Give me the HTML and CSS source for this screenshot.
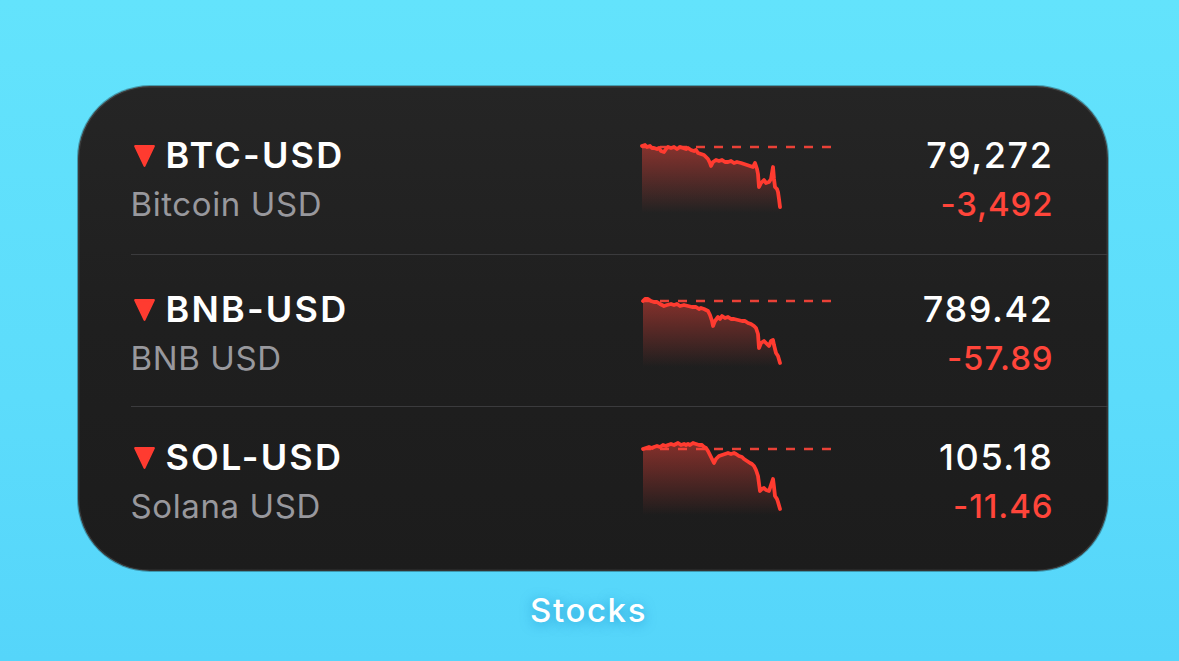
FILE: index.html
```html
<!DOCTYPE html>
<html lang="en">
  <head>
    <meta charset="UTF-8" />
    <meta name="viewport" content="width=device-width, initial-scale=1" />
    <title>Stocks Widget</title>
    <link rel="stylesheet" href="styles.css">
  </head>
  <body>
    <div class="screen">
      <div class="widget">
        <!-- BTC -->
        <div class="row">
          <div class="name">
            <div class="ticker">
              <svg class="arrow" viewBox="0 0 24 24"><polygon points="3,3 21,3 12,22" /></svg>
              <span>BTC-USD</span>
            </div>
            <div class="full">Bitcoin USD</div>
          </div>
          <svg class="chart" viewBox="0 0 194 72">
            <defs>
              <linearGradient id="fade" x1="0" y1="0" x2="0" y2="1">
                <stop offset="0" stop-color="#ff453a" stop-opacity="0.46" />
                <stop offset="1" stop-color="#ff453a" stop-opacity="0" />
              </linearGradient>
            </defs>
            <path class="area" d="M0,5 L3,4 5,6 8,5 10,7 12,7 15,8 17,7 19,10 22,11 24,8 26,6 29,7 32,6 35,8 38,6 41,7 44,8 46,7 49,9 52,10 54,9 56,12 59,13 62,14 64,16 66,18 68,22 69,25 71,21 74,19 77,20 80,19 83,21 86,21 89,20 92,22 95,21 99,22 102,23 105,24 108,25 111,26 113,22 115,28 116,33 117,46 119,42 122,39 124,42 127,41 129,38 131,26 132,38 133,46 135,48 136,51 137,58 138,66 L138,72 L0,72 Z" />
            <line class="prev" x1="0" y1="6" x2="193" y2="6" />
            <polyline class="line" points="0,5 3,4 5,6 8,5 10,7 12,7 15,8 17,7 19,10 22,11 24,8 26,6 29,7 32,6 35,8 38,6 41,7 44,8 46,7 49,9 52,10 54,9 56,12 59,13 62,14 64,16 66,18 68,22 69,25 71,21 74,19 77,20 80,19 83,21 86,21 89,20 92,22 95,21 99,22 102,23 105,24 108,25 111,26 113,22 115,28 116,33 117,46 119,42 122,39 124,42 127,41 129,38 131,26 132,38 133,46 135,48 136,51 137,58 138,66" />
          </svg>
          <div class="quote">
            <div class="price">79,272</div>
            <div class="change">-3,492</div>
          </div>
        </div>
        <!-- BNB -->
        <div class="row">
          <div class="name">
            <div class="ticker">
              <svg class="arrow" viewBox="0 0 24 24"><polygon points="3,3 21,3 12,22" /></svg>
              <span>BNB-USD</span>
            </div>
            <div class="full">BNB USD</div>
          </div>
          <svg class="chart" viewBox="0 0 194 72">
            <path class="area" d="M1,6 L3,4 6,4 9,6 12,7 15,7 18,9 22,11 25,10 29,9 32,10 35,9 38,11 42,10 46,11 50,12 54,12 57,14 59,13 62,14 64,15 66,16 68,20 70,26 71,31 73,26 76,22 78,24 80,21 83,23 86,22 89,24 92,24 96,25 100,26 103,26 106,28 109,29 112,31 114,33 116,39 117,53 119,48 122,46 124,48 127,51 129,46 131,45 132,50 134,58 136,61 138,68 L138,72 L1,72 Z" />
            <line class="prev" x1="0" y1="6" x2="193" y2="6" />
            <polyline class="line" points="1,6 3,4 6,4 9,6 12,7 15,7 18,9 22,11 25,10 29,9 32,10 35,9 38,11 42,10 46,11 50,12 54,12 57,14 59,13 62,14 64,15 66,16 68,20 70,26 71,31 73,26 76,22 78,24 80,21 83,23 86,22 89,24 92,24 96,25 100,26 103,26 106,28 109,29 112,31 114,33 116,39 117,53 119,48 122,46 124,48 127,51 129,46 131,45 132,50 134,58 136,61 138,68" />
          </svg>
          <div class="quote">
            <div class="price">789.42</div>
            <div class="change">-57.89</div>
          </div>
        </div>
        <!-- SOL -->
        <div class="row">
          <div class="name">
            <div class="ticker">
              <svg class="arrow" viewBox="0 0 24 24"><polygon points="3,3 21,3 12,22" /></svg>
              <span>SOL-USD</span>
            </div>
            <div class="full">Solana USD</div>
          </div>
          <svg class="chart" viewBox="0 0 194 72">
            <path class="area" d="M1,6 L4,5 7,4 10,5 12,4 15,3 18,4 21,2 24,3 26,2 29,1 32,2 34,1 36,0 39,2 42,1 44,2 46,1 48,2 51,0 54,1 57,2 60,2 62,4 64,5 66,8 67,10 69,14 72,20 74,16 77,13 80,12 83,11 86,10 89,11 92,10 94,11 97,13 100,14 102,16 105,18 108,20 110,21 112,23 114,27 116,33 118,48 120,46 122,45 124,47 127,48 129,42 131,36 132,44 133,53 135,56 136,59 138,66 L138,72 L1,72 Z" />
            <line class="prev" x1="0" y1="6" x2="193" y2="6" />
            <polyline class="line" points="1,6 4,5 7,4 10,5 12,4 15,3 18,4 21,2 24,3 26,2 29,1 32,2 34,1 36,0 39,2 42,1 44,2 46,1 48,2 51,0 54,1 57,2 60,2 62,4 64,5 66,8 67,10 69,14 72,20 74,16 77,13 80,12 83,11 86,10 89,11 92,10 94,11 97,13 100,14 102,16 105,18 108,20 110,21 112,23 114,27 116,33 118,48 120,46 122,45 124,47 127,48 129,42 131,36 132,44 133,53 135,56 136,59 138,66" />
          </svg>
          <div class="quote">
            <div class="price">105.18</div>
            <div class="change">-11.46</div>
          </div>
        </div>
      </div>
      <div class="label">Stocks</div>
    </div>
  </body>
</html>
```

FILE: styles.css
```css
* { box-sizing: border-box; }
html, body {
  margin: 0;
  padding: 0;
  height: 100%;
  overflow: hidden;
}
body {
  font-family: "Inter", "Roboto", "DejaVu Sans", sans-serif;
  background: linear-gradient(180deg, #63e3fc 0%, #5cdcfb 60%, #55d5fa 100%);
}
.screen {
  display: flex;
  flex-direction: column;
  align-items: center;
  padding-top: 86px;
  padding-left: 6px;
}
.widget {
  width: 1030px;
  height: 485px;
  padding: 17px 0 12px 53px;
  border-radius: 72px;
  background: linear-gradient(180deg, #252525 0%, #1f1f1f 50%, #1c1c1c 100%);
  box-shadow: inset 0 0 0 1.5px rgba(255, 255, 255, 0.1), 0 0 0 1px rgba(0, 0, 0, 0.3);
  overflow: hidden;
}
.row {
  display: grid;
  grid-template-columns: 1fr 194px 218px;
  align-items: start;
  padding: 30px 54px 28px 0;
  border-bottom: 1px solid #3b3b3d;
}
.row:nth-child(2) { padding-top: 32px; padding-bottom: 26px; }
.row:last-child { border-bottom: none; padding-top: 28px; }
.ticker {
  display: flex;
  align-items: center;
  gap: 9px;
  height: 44px;
  color: #fff;
  font-size: 36px;
  font-weight: 600;
  letter-spacing: 2.2px;
}
.arrow {
  width: 25px;
  height: 25px;
  margin-left: 1px;
  margin-top: 1px;
}
.arrow polygon {
  fill: #ff3b30;
  stroke: #ff3b30;
  stroke-width: 2;
  stroke-linejoin: round;
}
.full {
  margin-top: 5px;
  height: 44px;
  line-height: 44px;
  color: #98989d;
  font-size: 33px;
  font-weight: 400;
  letter-spacing: 0.6px;
}
.chart {
  width: 194px;
  height: 72px;
  margin-top: 8px;
  overflow: visible;
}
.chart .area { fill: url(#fade); }
.chart .prev {
  stroke: #ff453a;
  stroke-width: 2.6;
  stroke-dasharray: 9 9;
  opacity: 0.9;
}
.chart .line {
  fill: none;
  stroke: #ff3b30;
  stroke-width: 3.8;
  stroke-linejoin: round;
  stroke-linecap: round;
}
.quote { text-align: right; }
.price {
  height: 44px;
  line-height: 44px;
  color: #fff;
  font-size: 36px;
  font-weight: 500;
  letter-spacing: 1.6px;
}
.change {
  margin-top: 5px;
  height: 44px;
  line-height: 44px;
  color: #ff453a;
  font-size: 33px;
  font-weight: 500;
  letter-spacing: 0.9px;
}
.label {
  margin-top: 19px;
  margin-right: 8px;
  line-height: 40px;
  color: #fff;
  font-size: 33px;
  font-weight: 500;
  letter-spacing: 1.6px;
  text-shadow: 0 2px 12px rgba(0, 120, 190, 0.55);
}
```
